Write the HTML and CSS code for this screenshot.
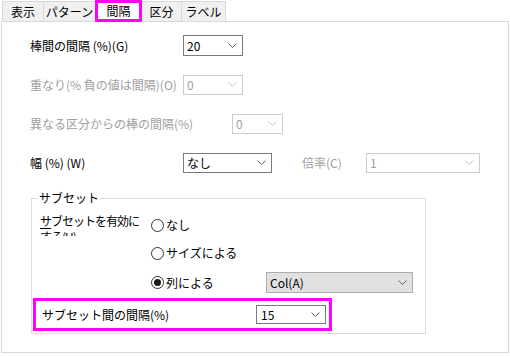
FILE: index.html
```html
<!DOCTYPE html>
<html lang="ja">
<head>
<meta charset="utf-8">
<link rel="stylesheet" href="styles.css">
</head>
<body>
<div class="tabs">
  <div class="tab tab-1">表示</div>
  <div class="tab tab-2">パターン</div>
  <div class="tab tab-active">間隔</div>
  <div class="tab tab-4">区分</div>
  <div class="tab tab-5">ラベル</div>
</div>
<div class="panel">
  <div class="row">
    <span class="lbl lbl-w1">棒間の間隔 (%)(G)</span>
    <div class="combo combo-20"><span>20</span><svg class="chev" width="9" height="5" viewBox="0 0 9 5"><path d="M0.5 0.5 L4.5 4.5 L8.5 0.5" fill="none" stroke="currentColor"/></svg></div>
  </div>
  <div class="row disabled">
    <span class="lbl lbl-w1">重なり(% 負の値は間隔)(O)</span>
    <div class="combo combo-20 combo-dis"><span>0</span><svg class="chev" width="9" height="5" viewBox="0 0 9 5"><path d="M0.5 0.5 L4.5 4.5 L8.5 0.5" fill="none" stroke="currentColor"/></svg></div>
  </div>
  <div class="row disabled">
    <span class="lbl lbl-w3">異なる区分からの棒の間隔(%)</span>
    <div class="combo combo-gap combo-dis"><span>0</span><svg class="chev" width="9" height="5" viewBox="0 0 9 5"><path d="M0.5 0.5 L4.5 4.5 L8.5 0.5" fill="none" stroke="currentColor"/></svg></div>
  </div>
  <div class="row row-last">
    <span class="lbl lbl-w1">幅 (%) (W)</span>
    <div class="combo combo-width"><span>なし</span><svg class="chev" width="9" height="5" viewBox="0 0 9 5"><path d="M0.5 0.5 L4.5 4.5 L8.5 0.5" fill="none" stroke="currentColor"/></svg></div>
    <span class="lbl lbl-rate dis-text">倍率(C)</span>
    <div class="combo combo-rate combo-dis"><span>1</span><svg class="chev" width="9" height="5" viewBox="0 0 9 5"><path d="M0.5 0.5 L4.5 4.5 L8.5 0.5" fill="none" stroke="currentColor"/></svg></div>
  </div>

  <fieldset class="group">
    <legend>サブセット</legend>
    <div class="enable">
      <div class="enable-label"><u>サ</u>ブセットを有効に<br>する(U)</div>
      <div class="radios">
        <div class="radio"><span class="circle"></span>なし</div>
        <div class="radio"><span class="circle"></span>サイズによる</div>
        <div class="radio-row">
          <div class="radio radio-col"><span class="circle checked"></span>列による</div>
          <div class="combo combo-list"><span>Col(A)</span><svg class="chev" width="9" height="5" viewBox="0 0 9 5"><path d="M0.5 0.5 L4.5 4.5 L8.5 0.5" fill="none" stroke="currentColor"/></svg></div>
        </div>
      </div>
    </div>
    <div class="highlight">
      <span class="lbl lbl-sub">サブセット間の間隔(%)</span>
      <div class="combo combo-15"><span>15</span><svg class="chev" width="9" height="5" viewBox="0 0 9 5"><path d="M0.5 0.5 L4.5 4.5 L8.5 0.5" fill="none" stroke="currentColor"/></svg></div>
    </div>
  </fieldset>
</div>
</body>
</html>
```

FILE: styles.css
```css
* { box-sizing: border-box; }

body {
  margin: 0;
  width: 510px;
  height: 356px;
  overflow: hidden;
  background: #ffffff;
  color: #000000;
  font-family: "Noto Sans CJK JP", "Noto Sans", sans-serif;
  font-size: 12px;
  line-height: 16px;
}

/* ---------- tabs ---------- */
.tabs {
  display: flex;
  align-items: flex-end;
  height: 21px;
  padding-left: 2px;
}

.tab {
  height: 20px;
  margin-right: -1px;
  background: #f0f0f0;
  border: 1px solid #d9d9d9;
  border-bottom: none;
  display: flex;
  align-items: center;
  justify-content: center;
}

.tab-1 { width: 42px; }
.tab-2 { width: 53px; }
.tab-4 { width: 41px; }
.tab-5 { width: 45px; }

.tab-active {
  position: relative;
  z-index: 1;
  align-self: flex-start;
  width: 47px;
  height: 22px;
  background: #ffffff;
  border: 3px solid #ff00ff;
}

/* ---------- panel ---------- */
.panel {
  margin-left: 1px;
  width: 508px;
  height: 332px;
  border: 1px solid #d9d9d9;
  padding: 13px 0 0 28px;
}

.row {
  display: flex;
  align-items: center;
  height: 21px;
  margin-bottom: 18px;
}

.row-last { margin-bottom: 0; }

.lbl { white-space: nowrap; flex: none; }
.lbl-w1 { width: 153px; }
.lbl-w3 { width: 202px; }
.lbl-rate { width: 64px; margin-left: 30px; }
.lbl-sub { width: 214px; }

.disabled .lbl,
.dis-text { color: #a0a0a0; }

/* ---------- combos ---------- */
.combo {
  flex: none;
  display: flex;
  align-items: center;
  justify-content: space-between;
  height: 20px;
  padding: 0 5px 0 3px;
  background: #ffffff;
  border: 1px solid #7a7a7a;
  color: #000000;
  white-space: nowrap;
}

.combo .chev { color: #606060; flex: none; }

.combo-dis {
  border-color: #cccccc;
  color: #a0a0a0;
}
.combo-dis .chev { color: #c4c4c4; }

.combo-20 { width: 60px; }
.row:first-child .combo { height: 21px; }
.combo-gap { width: 51px; }
.combo-width { width: 89px; }
.combo-rate { width: 114px; }

.combo-list {
  width: 147px;
  height: 21px;
  background: #e1e1e1;
  border-color: #adadad;
}

.combo-15 { width: 70px; height: 19px; padding-left: 4px; }

/* ---------- group box ---------- */
.group {
  margin: 17px 0 0 1px;
  width: 395px;
  min-width: 0;
  border: 1px solid #dcdcdc;
  padding: 0 0 2px 0;
}

.group legend {
  margin-left: 6px;
  padding: 0 1px;
  line-height: 16px;
}

.enable {
  display: flex;
  margin-top: 7px;
  padding-left: 8px;
}

.enable-label {
  width: 111px;
  height: 23px;
  overflow: hidden;
  line-height: 16px;
  letter-spacing: -1px;
  white-space: nowrap;
}

.enable-label u { text-underline-offset: 2px; }

.radios {
  display: flex;
  flex-direction: column;
  gap: 12px;
  margin-top: 4px;
}

.radio {
  display: flex;
  align-items: center;
  gap: 2px;
  height: 16px;
  white-space: nowrap;
}

.radio-row {
  display: flex;
  align-items: center;
  height: 21px;
  margin-top: -1px;
}

.radio-col { width: 115px; }

.circle {
  flex: none;
  width: 13px;
  height: 13px;
  border-radius: 50%;
  border: 1px solid #333333;
  background: #ffffff;
  display: flex;
  align-items: center;
  justify-content: center;
}

.circle.checked::after {
  content: "";
  width: 7px;
  height: 7px;
  border-radius: 50%;
  background: #1a1a1a;
}

/* ---------- highlighted row ---------- */
.highlight {
  display: flex;
  align-items: center;
  margin: 5px 0 0 1px;
  width: 299px;
  height: 33px;
  border: 3px solid #ff00ff;
  padding-left: 6px;
}
```
